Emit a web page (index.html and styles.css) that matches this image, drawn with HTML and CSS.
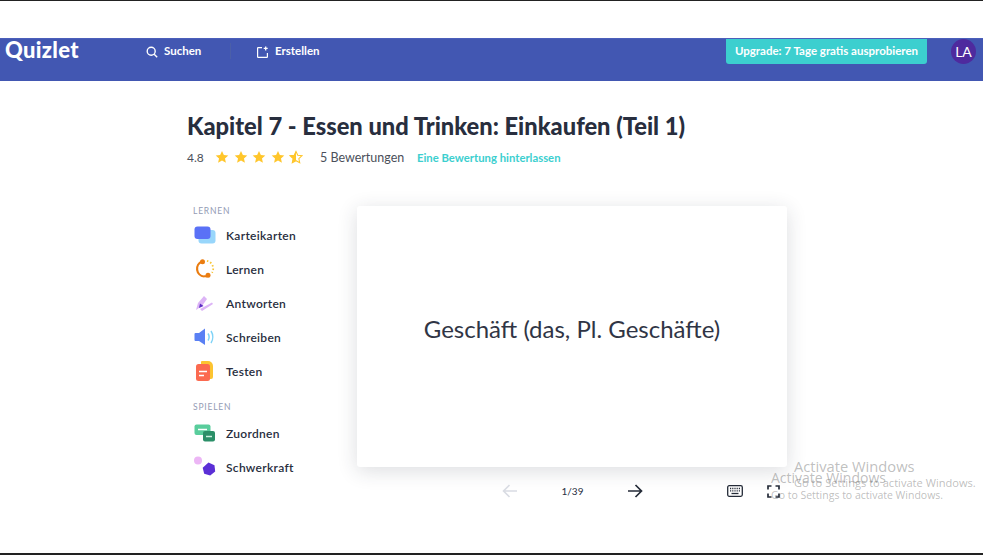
FILE: index.html
```html
<!DOCTYPE html>
<html lang="de">
<head>
    <meta charset="UTF-8">
    <title>Kapitel 7 - Quizlet</title>
    <link rel="stylesheet" href="styles.css">
</head>
<body>
    <div class="screen">
        <header class="topbar">
            <div class="logo">Quizlet</div>
            <div class="nav-item nav-search">
                <svg width="12" height="12" viewBox="0 0 12 12" fill="none" stroke="#fff" stroke-width="1.4"><circle cx="5.2" cy="5.2" r="4"/><path d="M8.2 8.2l3 3"/></svg>
                <span>Suchen</span>
            </div>
            <div class="nav-sep"></div>
            <div class="nav-item nav-create">
                <svg width="12" height="12" viewBox="0 0 12 12" fill="none" stroke="#fff" stroke-width="1.2"><path d="M5 1.6H1.2a.6.6 0 0 0-.6.6v8.6a.6.6 0 0 0 .6.6h8.6a.6.6 0 0 0 .6-.6V7"/><path d="M8.7.4v4M6.7 2.4h4" stroke-width="1.3"/></svg>
                <span>Erstellen</span>
            </div>
            <div class="upgrade">Upgrade: 7 Tage gratis ausprobieren</div>
            <div class="avatar">LA</div>
        </header>

        <main class="page">
            <h1>Kapitel 7 - Essen und Trinken: Einkaufen (Teil 1)</h1>
            <div class="rating">
                <span class="score">4.8</span>
                <div class="stars">
                    <svg width="14" height="14" viewBox="0 0 24 24"><path class="star" d="M12 1.5l3.2 7 7.6.8-5.700 5.100 1.600 7.600L12 18.100 5.300 22l1.600-7.600L1.200 9.300l7.600-.8z"/></svg>
                    <svg width="14" height="14" viewBox="0 0 24 24"><path class="star" d="M12 1.5l3.2 7 7.6.8-5.700 5.100 1.600 7.600L12 18.100 5.300 22l1.600-7.600L1.200 9.300l7.600-.8z"/></svg>
                    <svg width="14" height="14" viewBox="0 0 24 24"><path class="star" d="M12 1.5l3.2 7 7.6.8-5.700 5.100 1.600 7.600L12 18.100 5.300 22l1.600-7.600L1.200 9.300l7.600-.8z"/></svg>
                    <svg width="14" height="14" viewBox="0 0 24 24"><path class="star" d="M12 1.5l3.2 7 7.6.8-5.700 5.100 1.600 7.600L12 18.100 5.300 22l1.600-7.600L1.200 9.300l7.600-.8z"/></svg>
                    <svg width="14" height="14" viewBox="0 0 24 24"><path d="M12 2.500l3 6.500 7.300.8-5.400 4.900 1.500 7.200L12 18.300 5.600 21.900l1.500-7.200L1.700 9.800 9 9z" fill="none" stroke="#ffc62b" stroke-width="1.800"/><path class="star" d="M12 1.500v16.600L5.300 22l1.600-7.600L1.200 9.300l7.600-.8z"/></svg>
                </div>
                <span class="count">5 Bewertungen</span>
                <span class="leave">Eine Bewertung hinterlassen</span>
            </div>

            <div class="study">
                <nav class="modes">
                    <div class="modes-title">LERNEN</div>
                    <div class="mode">
                        <svg width="22" height="18" viewBox="0 0 22 18"><rect x="4.500" y="4" width="17" height="13.500" rx="3" fill="#98d6fb"/><rect x="0.500" y="0.500" width="16" height="12.500" rx="3" fill="#5a71f6"/></svg>
                        <span>Karteikarten</span>
                    </div>
                    <div class="mode">
                        <svg width="22" height="20" viewBox="0 0 22 20" fill="none"><path d="M8 2.500a7.800 7.800 0 0 0 2 15" stroke="#ea7c10" stroke-width="2.200"/><path d="M13 1.800a8 8 0 0 1 5 12" stroke="#f7c533" stroke-width="1.800" stroke-dasharray="1.500 2"/><circle cx="8.500" cy="2.800" r="2.500" fill="#ea7c10"/><circle cx="14" cy="16.300" r="2.500" fill="#ea7c10"/><path d="M10 17.300h3" stroke="#ea7c10" stroke-width="2"/></svg>
                        <span>Lernen</span>
                    </div>
                    <div class="mode">
                        <svg width="22" height="20" viewBox="0 0 22 20"><path d="M2 17l2-7 6-7 3 3-5 7z" fill="#dcb4f6"/><path d="M8 18l11-7-1-1.500L6 16z" fill="#dcb4f6"/><path d="M5 15l1-4.500 3.500 2.500z" fill="#5b2cc4"/></svg>
                        <span>Antworten</span>
                    </div>
                    <div class="mode">
                        <svg width="22" height="18" viewBox="0 0 22 18"><path d="M0.500 6a1 1 0 0 1 1-1H5l6-4.500V17l-6-4H1.500a1 1 0 0 1-1-1z" fill="#5a80f4"/><path d="M14 5.500c1.300 2 1.300 5 0 7M17 3c2.300 3.500 2.300 8.500 0 12" fill="none" stroke="#7fd3f7" stroke-width="1.500"/></svg>
                        <span>Schreiben</span>
                    </div>
                    <div class="mode">
                        <svg width="22" height="20" viewBox="0 0 22 20"><path d="M7 1a1 1 0 0 1 1-1h6a5 5 0 0 1 5 5v11a2 2 0 0 1-2 2H7z" fill="#fcc431"/><rect x="2" y="3" width="14" height="17" rx="2.500" fill="#fb6a50"/><path d="M5 10.500h8M5 14.500h5" stroke="#fff" stroke-width="1.500"/></svg>
                        <span>Testen</span>
                    </div>
                    <div class="modes-title modes-title-play">SPIELEN</div>
                    <div class="mode">
                        <svg width="22" height="18" viewBox="0 0 22 18"><rect x="0.500" y="0.500" width="16" height="10.500" rx="2" fill="#59cd9c"/><path d="M4 5.500h9" stroke="#fff" stroke-width="1.500"/><rect x="9" y="7" width="12" height="10.500" rx="2" fill="#2b8f68"/><path d="M12 12.500h6" stroke="#c9efdd" stroke-width="1.500"/></svg>
                        <span>Zuordnen</span>
                    </div>
                    <div class="mode">
                        <svg width="22" height="22" viewBox="0 0 22 22"><circle cx="4" cy="4.500" r="4" fill="#ecb6f5"/><path d="M14.500 6.500l6 2.800.7 6.300-5 3.900-6-1.800-1.500-6z" fill="#5b2fd6"/></svg>
                        <span>Schwerkraft</span>
                    </div>
                </nav>

                <section class="viewer">
                    <div class="card">Geschäft (das, Pl. Geschäfte)</div>
                    <div class="controls">
                        <svg class="arrow" width="16" height="14" viewBox="0 0 16 14" fill="none" stroke="#d9dce3" stroke-width="1.600"><path d="M15 7H1.500M7.500 1L1.500 7l6 6"/></svg>
                        <span class="pager">1/39</span>
                        <svg class="arrow" width="16" height="14" viewBox="0 0 16 14" fill="none" stroke="#242b38" stroke-width="1.700"><path d="M1 7h13.500M8.500 1l6 6-6 6"/></svg>
                        <svg class="kbd" width="16" height="12" viewBox="0 0 16 12" fill="none" stroke="#242b38"><rect x="0.700" y="0.700" width="14.600" height="10.600" rx="1.500" stroke-width="1.300"/><path d="M3 3.500h10M3 5.800h10" stroke-dasharray="1 .8" stroke-width="1.300"/><path d="M4.500 8.500h7" stroke-width="1.300"/></svg>
                        <svg class="full" width="13" height="13" viewBox="0 0 13 13" fill="none" stroke="#242b38" stroke-width="1.700"><path d="M1 4.500V1h3.500M8.500 1H12v3.500M12 8.500V12H8.500M4.500 12H1V8.500"/></svg>
                    </div>
                </section>
            </div>
        </main>

        <div class="watermark wm-back">
            <div class="wm-big">Activate Windows</div>
            <div class="wm-small">Go to Settings to activate Windows.</div>
        </div>
        <div class="watermark wm-front">
            <div class="wm-big">Activate Windows</div>
            <div class="wm-small">Go to Settings to activate Windows.</div>
        </div>
    </div>
</body>
</html>
```

FILE: styles.css
```css
html, body {
    margin: 0;
    padding: 0;
    background-color: #fff;
}
.screen {
    position: relative;
    width: 983px;
    height: 555px;
    box-sizing: border-box;
    padding-top: 38px;
    border-top: 1px solid #222;
    border-bottom: 2px solid #222;
    overflow: hidden;
    font-family: Lato, "Liberation Sans", sans-serif;
    color: #282e3e;
}
.topbar {
    display: flex;
    align-items: flex-start;
    height: 42px;
    margin-top: -1px;
    background-color: #4257b2;
    border-top: 1px solid #4b5fbb;
    color: #fff;
}
.logo {
    width: 146px;
    padding-left: 5px;
    box-sizing: border-box;
    font-size: 22px;
    line-height: 22px;
    font-weight: 900;
    letter-spacing: 0.3px;
}
.nav-item {
    display: flex;
    align-items: center;
    gap: 6px;
    height: 22px;
    font-size: 11.500px;
    font-weight: 700;
}
.nav-item svg {
    margin-top: 3px;
}
.nav-search {
    width: 84px;
}
.nav-sep {
    width: 1px;
    height: 16px;
    margin: 4px 26px 0 0;
    background-color: #4b5fa8;
}
.nav-create {
    width: 469px;
}
.upgrade {
    width: 201px;
    height: 25px;
    border-radius: 0 0 3px 3px;
    background-color: #3ccfcf;
    font-size: 11.500px;
    font-weight: 700;
    line-height: 24px;
    text-align: center;
}
.avatar {
    width: 25px;
    height: 25px;
    margin-left: 24px;
    border-radius: 50%;
    background-color: #4e2a9e;
    font-size: 14px;
    line-height: 25px;
    text-align: center;
}
.page {
    padding: 33px 0 0 187px;
}
h1 {
    margin: 0;
    font-size: 23.700px;
    line-height: 24px;
    font-weight: 900;
}
.rating {
    display: flex;
    align-items: center;
    height: 20px;
    margin-top: 9px;
    font-size: 12px;
    color: #4b4f5a;
}
.score {
    width: 28px;
}
.stars {
    display: flex;
    gap: 4.500px;
    width: 105px;
}
.star {
    fill: #ffc62b;
}
.count {
    width: 97px;
    font-size: 12.500px;
}
.leave {
    color: #3ccfcf;
    font-size: 11.300px;
    font-weight: 700;
}
.study {
    display: flex;
    margin-top: 39px;
}
.modes {
    width: 170px;
}
.modes-title {
    margin-left: 6px;
    margin-bottom: 2px;
    font-size: 8.500px;
    line-height: 10px;
    letter-spacing: 0.8px;
    color: #939bb4;
}
.modes-title-play {
    margin-top: 14px;
    margin-bottom: 4px;
}
.mode {
    display: flex;
    align-items: center;
    gap: 10px;
    height: 34px;
    margin-left: 7px;
    font-size: 12px;
    font-weight: 600;
    letter-spacing: 0.3px;
}
.mode svg {
    flex: none;
}
.viewer {
    width: 430px;
}
.card {
    display: flex;
    align-items: center;
    justify-content: center;
    box-sizing: border-box;
    height: 261px;
    padding-bottom: 16px;
    border-radius: 3px;
    background-color: #fff;
    box-shadow: 0 4px 20px rgba(40, 46, 62, 0.16);
    font-size: 24px;
    color: #303545;
}
.controls {
    display: flex;
    align-items: center;
    height: 20px;
    margin-top: 14px;
}
.arrow {
    flex: none;
}
.controls .arrow:first-child {
    margin-left: 145px;
}
.pager {
    width: 109px;
    text-align: center;
    font-size: 10px;
}
.kbd {
    margin-left: 84px;
}
.full {
    margin-left: 24px;
}
.watermark {
    position: absolute;
    color: rgba(90, 90, 90, 0.4);
    font-family: "Open Sans", sans-serif;
    white-space: nowrap;
}
.wm-big {
    font-size: 14px;
    line-height: 18px;
}
.wm-small {
    font-size: 10.500px;
    line-height: 16px;
}
.wm-back {
    left: 794px;
    top: 456px;
}
.wm-back .wm-big {
    font-size: 14.700px;
}
.wm-back .wm-small {
    font-size: 11.100px;
}
.wm-front {
    left: 771px;
    top: 468px;
}
```
